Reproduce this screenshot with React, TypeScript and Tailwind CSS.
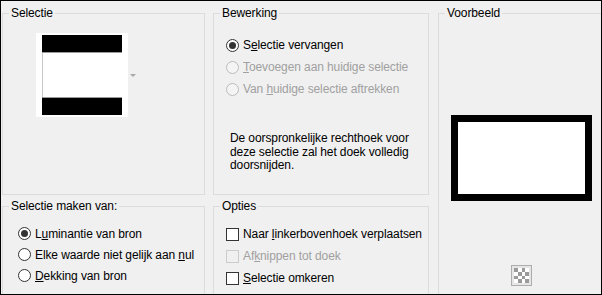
import React from 'react';

// Radiobutton in Windows-stijl
function Radio({ checked = false, disabled = false }: { checked?: boolean; disabled?: boolean }) {
  return (
    <span
      className={
        'flex h-[13px] w-[13px] shrink-0 items-center justify-center rounded-full border ' +
        (disabled ? 'border-[#bcbcbc] bg-[#f4f4f4]' : 'border-[#333333] bg-white')
      }
    >
      {checked && <span className="h-[7px] w-[7px] rounded-full bg-[#333333]" />}
    </span>
  );
}

function Check({ disabled = false }: { disabled?: boolean }) {
  return (
    <span
      className={
        'h-[13px] w-[13px] shrink-0 border ' +
        (disabled ? 'border-[#cccccc] bg-[#f0f0f0]' : 'border-[#333333] bg-white')
      }
    />
  );
}

function Group({
  title,
  className,
  children,
}: {
  title: string;
  className?: string;
  children?: React.ReactNode;
}) {
  return (
    <fieldset className={'shrink-0 border border-[#dcdcdc] ' + (className || '')}>
      <legend className="ml-[6px] px-[2px] leading-[16px] text-black">{title}</legend>
      {children}
    </fieldset>
  );
}

export default function App() {
  return (
    <div className="flex h-[295px] w-[602px] items-start overflow-hidden border border-black bg-[#f0f0f0] pl-[1px] pt-[4px] font-['Liberation_Sans',Arial,sans-serif] text-[12px] tracking-[-0.1px] text-black">
      {/* Kolom 1 */}
      <div className="flex w-[203px] shrink-0 flex-col gap-[3px]">
        <Group title="Selectie" className="h-[190px]">
          <div className="ml-[33px] mt-[12px] flex items-center">
            <div className="h-[84px] w-[92px] bg-white pl-[6px] pt-[2px]">
              <div className="h-[17px] w-[80px] bg-black" />
              <div className="h-[46px] w-[80px] border-b border-t border-b-[#999999] border-t-[#999999]">
                <div className="h-full w-[1px] bg-[#c8c8c8]" />
              </div>
              <div className="h-[17px] w-[80px] bg-black" />
            </div>
            <div className="ml-[2px] h-0 w-0 border-l-[3px] border-r-[3px] border-t-[3px] border-l-transparent border-r-transparent border-t-[#a8a8a8]" />
          </div>
        </Group>
        <Group title="Selectie maken van:" className="h-[120px]">
          <div className="ml-[15px] mt-[9px] flex flex-col">
            <label className="flex h-[21px] items-center gap-[4px]">
              <Radio checked />
              <span>
                L<u>u</u>minantie van bron
              </span>
            </label>
            <label className="flex h-[21px] items-center gap-[4px]">
              <Radio />
              <span>
                Elke waarde niet gelijk aan <u>n</u>ul
              </span>
            </label>
            <label className="flex h-[21px] items-center gap-[4px]">
              <Radio />
              <span>
                <u>D</u>ekking van bron
              </span>
            </label>
          </div>
        </Group>
      </div>

      {/* Kolom 2 */}
      <div className="ml-[8px] flex w-[216px] shrink-0 flex-col gap-[3px]">
        <Group title="Bewerking" className="h-[190px]">
          <div className="ml-[12px] mt-[13px] flex flex-col">
            <label className="flex h-[22px] items-center gap-[4px]">
              <Radio checked />
              <span>
                S<u>e</u>lectie vervangen
              </span>
            </label>
            <label className="flex h-[22px] items-center gap-[4px] text-[#a0a0a0]">
              <Radio disabled />
              <span>
                <u>T</u>oevoegen aan huidige selectie
              </span>
            </label>
            <label className="flex h-[22px] items-center gap-[4px] text-[#a0a0a0]">
              <Radio disabled />
              <span>
                Van <u>h</u>uidige selectie aftrekken
              </span>
            </label>
          </div>
          <p className="ml-[16px] mt-[32px] w-[190px] leading-[13.5px]">
            De oorspronkelijke rechthoek voor deze selectie zal het doek volledig doorsnijden.
          </p>
        </Group>
        <Group title="Opties" className="h-[120px]">
          <div className="ml-[12px] mt-[9px] flex flex-col">
            <label className="flex h-[22px] items-center gap-[4px]">
              <Check />
              <span>
                Naar <u>l</u>inkerbovenhoek verplaatsen
              </span>
            </label>
            <label className="flex h-[22px] items-center gap-[4px] text-[#a0a0a0]">
              <Check disabled />
              <span>
                Af<u>k</u>nippen tot doek
              </span>
            </label>
            <label className="flex h-[22px] items-center gap-[4px]">
              <Check />
              <span>
                <u>S</u>electie omkeren
              </span>
            </label>
          </div>
        </Group>
      </div>

      {/* Kolom 3 */}
      <div className="ml-[9px] w-[180px] shrink-0">
        <Group title="Voorbeeld" className="h-[320px]">
          <div className="ml-[12px] mt-[94px] h-[86px] w-[141px] border-[7px] border-black bg-white" />
          <div className="ml-[72px] mt-[64px] flex h-[21px] w-[21px] items-center justify-center border border-[#adadad] bg-[#e6e6e6]">
            <svg width="15" height="15" viewBox="0 0 4 4" shapeRendering="crispEdges">
              <rect width="4" height="4" fill="#ffffff" />
              <rect x="0" y="0" width="1" height="1" fill="#9a9a9a" />
              <rect x="2" y="0" width="1" height="1" fill="#9a9a9a" />
              <rect x="1" y="1" width="1" height="1" fill="#9a9a9a" />
              <rect x="3" y="1" width="1" height="1" fill="#9a9a9a" />
              <rect x="0" y="2" width="1" height="1" fill="#9a9a9a" />
              <rect x="2" y="2" width="1" height="1" fill="#9a9a9a" />
              <rect x="1" y="3" width="1" height="1" fill="#9a9a9a" />
              <rect x="3" y="3" width="1" height="1" fill="#9a9a9a" />
            </svg>
          </div>
        </Group>
      </div>
    </div>
  );
}
